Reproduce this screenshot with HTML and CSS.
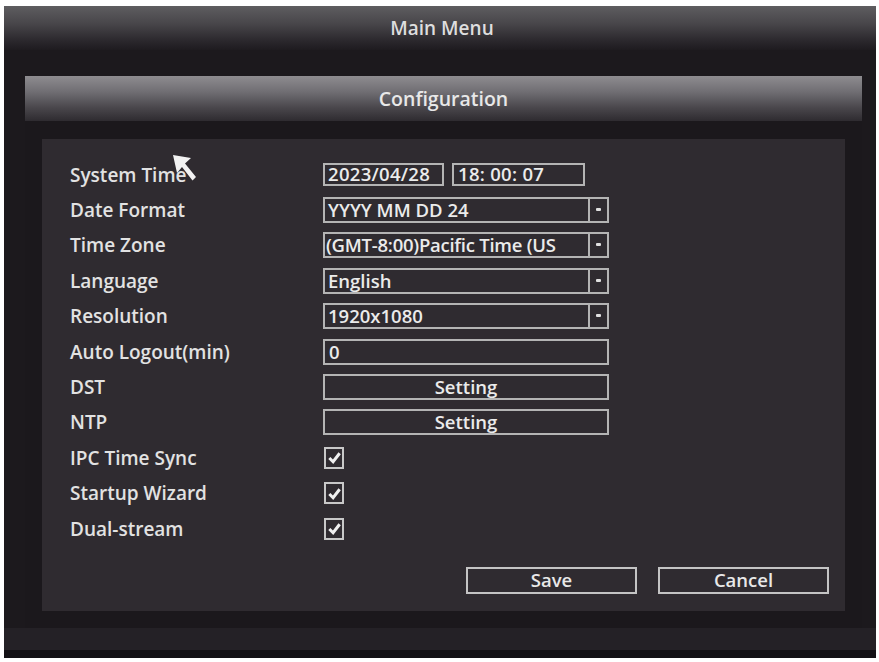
FILE: index.html
```html
<!DOCTYPE html>
<html lang="en">
<head>
    <meta charset="UTF-8">
    <title>Main Menu - Configuration</title>
    <link rel="stylesheet" href="styles.css">
</head>
<body>
    <div class="frame">
        <div class="title">Main Menu</div>
        <div class="main">
            <div class="config">
                <div class="config-head">Configuration</div>
                <div class="config-body">
                    <div class="content">
                        <div class="rows">
                            <div class="label">System Time</div>
                            <div class="ctrl">
                                <span class="box date">2023/04/28</span>
                                <span class="box time">18: 00: 07</span>
                            </div>

                            <div class="label">Date Format</div>
                            <div class="ctrl">
                                <span class="box select"><span class="val">YYYY MM DD 24</span><span class="arrow"></span></span>
                            </div>

                            <div class="label">Time Zone</div>
                            <div class="ctrl">
                                <span class="box select"><span class="val tight">(GMT-8:00)Pacific Time (US</span><span class="arrow"></span></span>
                            </div>

                            <div class="label">Language</div>
                            <div class="ctrl">
                                <span class="box select"><span class="val">English</span><span class="arrow"></span></span>
                            </div>

                            <div class="label">Resolution</div>
                            <div class="ctrl">
                                <span class="box select"><span class="val">1920x1080</span><span class="arrow"></span></span>
                            </div>

                            <div class="label">Auto Logout(min)</div>
                            <div class="ctrl">
                                <span class="box field">0</span>
                            </div>

                            <div class="label">DST</div>
                            <div class="ctrl">
                                <span class="box btn">Setting</span>
                            </div>

                            <div class="label">NTP</div>
                            <div class="ctrl">
                                <span class="box btn">Setting</span>
                            </div>

                            <div class="label">IPC Time Sync</div>
                            <div class="ctrl">
                                <span class="check"><svg viewBox="0 0 16 16"><path d="M2.5 8.5 L6.5 12.5 L13.5 3.5" /></svg></span>
                            </div>

                            <div class="label">Startup Wizard</div>
                            <div class="ctrl">
                                <span class="check"><svg viewBox="0 0 16 16"><path d="M2.5 8.5 L6.5 12.5 L13.5 3.5" /></svg></span>
                            </div>

                            <div class="label">Dual-stream</div>
                            <div class="ctrl">
                                <span class="check"><svg viewBox="0 0 16 16"><path d="M2.5 8.5 L6.5 12.5 L13.5 3.5" /></svg></span>
                            </div>
                        </div>

                        <div class="actions">
                            <span class="action">Save</span>
                            <span class="action">Cancel</span>
                        </div>

                        <!-- mouse pointer -->
                        <svg class="cursor" viewBox="0 0 24 28">
                            <polygon points="0,0 18,3 12,8.5 23,22 19.5,25.5 9,12 4,18" />
                        </svg>
                    </div>
                </div>
            </div>
        </div>
    </div>
</body>
</html>
```

FILE: styles.css
```css
body {
    margin: 0;
    background: #ffffff;
    font-family: 'Open Sans', 'Noto Sans', sans-serif;
    font-weight: 600;
    color: #e0e0e0;
}

.frame {
    margin: 6px 3px 4px 4px;
    width: 872px;
    height: 652px;
    background: linear-gradient(#1c191d 95.4%, #242126 95.4%, #242126 98.8%, #131115 98.8%);
    display: flex;
    flex-direction: column;
}

.title {
    height: 44px;
    line-height: 44px;
    text-align: center;
    font-size: 19px;
    padding-left: 4px;
    color: #dedede;
    background: linear-gradient(#5e5d60 0%, #48464a 40%, #2a272c 80%, #1e1b1f 100%);
}

.main {
    padding: 26px 14px 30px 21px;
}

.config {
    height: 552px;
    background: #1b181c;
    display: flex;
    flex-direction: column;
}

.config-head {
    height: 45px;
    line-height: 46px;
    text-align: center;
    font-size: 19.5px;
    color: #e8e8e8;
    background: linear-gradient(#8e8c90 0%, #706e73 35%, #4a474c 70%, #2e2b30 100%);
}

.config-body {
    flex: 1;
    padding: 18px 17px 17px 17px;
    display: flex;
}

.content {
    flex: 1;
    position: relative;
    background: #2f2b30;
    padding: 18px 16px 0 28px;
}

.rows {
    display: grid;
    grid-template-columns: 253px 286px;
    grid-auto-rows: 35.4px;
    align-items: center;
}

.label {
    font-size: 19px;
    color: #e2e2e2;
}

.ctrl {
    display: flex;
    gap: 8px;
    align-items: center;
}

.box {
    box-sizing: border-box;
    height: 26px;
    border: 2px solid #b4b4b4;
    font-size: 18.5px;
    line-height: 21px;
    color: #ebebeb;
    padding-left: 4px;
    white-space: nowrap;
}

.date {
    width: 121px;
    height: 23px;
    line-height: 18px;
    letter-spacing: 0.3px;
    padding-left: 3px;
}

.time {
    width: 133px;
    height: 23px;
    line-height: 18px;
    letter-spacing: 0.3px;
}

.select {
    width: 286px;
    display: flex;
    padding-left: 0;
}

.select .val {
    flex: 1;
    padding-left: 3px;
}

.select .tight {
    letter-spacing: -0.25px;
    padding-left: 1px;
}

.select .arrow {
    width: 17px;
    border-left: 2px solid #b4b4b4;
    position: relative;
}

.select .arrow::after {
    content: "";
    position: absolute;
    left: 6px;
    top: 9px;
    width: 5px;
    height: 3px;
    background: #e0e0e0;
    border-radius: 1px;
}

.field {
    width: 286px;
}

.btn {
    width: 286px;
    text-align: center;
    padding-left: 0;
    font-size: 18.5px;
}

.check {
    box-sizing: border-box;
    width: 20px;
    height: 22px;
    margin-left: 1px;
    border: 2px solid #c8c8c8;
    display: flex;
    align-items: center;
    justify-content: center;
}

.check svg {
    width: 15px;
    height: 15px;
    fill: none;
    stroke: #f0f0f0;
    stroke-width: 3.2;
}

.actions {
    display: flex;
    justify-content: flex-end;
    gap: 21px;
    margin-top: 21px;
}

.action {
    box-sizing: border-box;
    width: 171px;
    height: 27px;
    border: 2px solid #c4c4c4;
    text-align: center;
    font-size: 18.5px;
    line-height: 22px;
    color: #e8e8e8;
}

.cursor {
    position: absolute;
    left: 131px;
    top: 16px;
    width: 24px;
    height: 28px;
    fill: #f2f2f2;
}
```
